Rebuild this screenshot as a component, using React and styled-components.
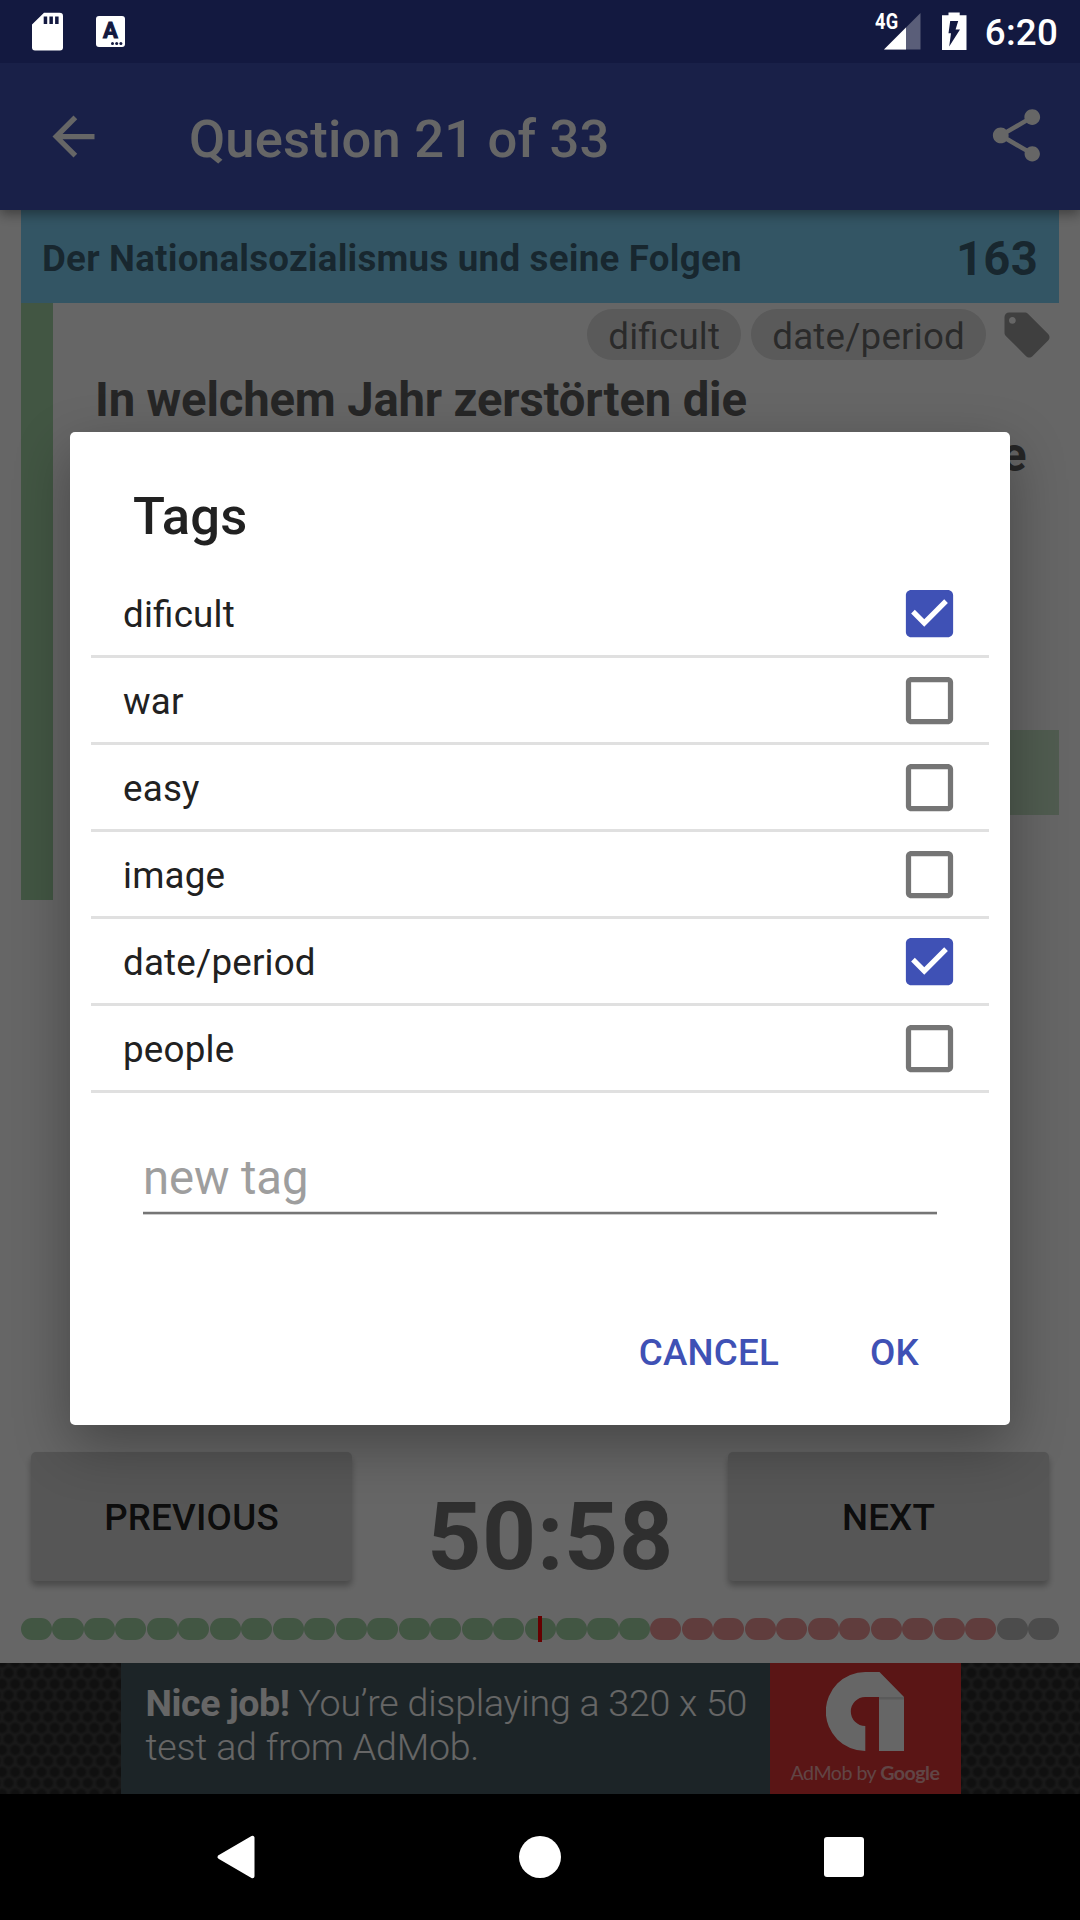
import React from "react";
import styled, { createGlobalStyle, css } from "styled-components";

const GlobalStyle = createGlobalStyle`
  *, *::before, *::after { box-sizing: border-box; }
  body { margin: 0; background: #000; }
  button, input { font: inherit; letter-spacing: inherit; border: 0; background: none; padding: 0; }
`;

const Screen = styled.div`
  position: relative;
  width: 1080px;
  height: 1920px;
  display: flex;
  flex-direction: column;
  overflow: hidden;
  background: #fff;
  color: rgba(0, 0, 0, 0.54);
  font-family: Roboto, "Liberation Sans", sans-serif;
  font-size: 36.75px;
  letter-spacing: 0.2px;
  font-feature-settings: "liga" 1;
`;

/* ---------- status bar ---------- */

const StatusBar = styled.header`
  position: relative;
  z-index: 2;
  height: 63px;
  flex: none;
  display: flex;
  align-items: flex-start;
  padding: 12px 22px 0 32px;
  background: #131940;
  color: #fff;
`;

const Notifications = styled.div`
  display: flex;
  gap: 33px;
  flex: 1;
`;

const AppBadge = styled.div`
  width: 29px;
  height: 31px;
  margin-top: 4px;
  border-radius: 3px;
  background: #fff;
  color: #131940;
  display: flex;
  flex-direction: column;
  align-items: center;
  font-size: 22px;
  font-weight: 700;
  line-height: 30px;
  -webkit-text-stroke: 1px #131940;
`;

const BadgeDots = styled.svg`
  width: 12px;
  height: 3px;
  margin: -4px 0 0 13px;
  flex: none;
`;

const Network = styled.div`
  display: flex;
  width: 46px;
  margin-right: 21px;
`;

const NetworkLabel = styled.span`
  width: 8px;
  flex: none;
  font-size: 22px;
  font-weight: 700;
  line-height: 20px;
  transform: scaleX(0.83);
  transform-origin: 0 0;
`;

const SignalIcon = styled.svg`
  width: 38px;
  height: 38px;
  flex: none;
`;

const Clock = styled.time`
  margin-left: 18px;
  font-weight: 500;
  line-height: 42px;
`;

/* ---------- app bar ---------- */

const AppBar = styled.nav`
  position: relative;
  z-index: 1;
  height: 147px;
  flex: none;
  display: flex;
  align-items: center;
  padding: 0 32px 0 42px;
  background: #3f51b5;
  color: #fff;
  box-shadow: 0 4px 12px rgba(0, 0, 0, 0.4);
`;

const Icon = styled.svg`
  width: ${(p) => p.$size || 63}px;
  height: ${(p) => p.$size || 63}px;
  flex: none;
  fill: currentColor;
`;

const Title = styled.h1`
  flex: 1;
  margin: 4px 0 0 84px;
  font-size: 52.5px;
  font-weight: 500;
  line-height: 62px;
`;

/* ---------- question page ---------- */

const Page = styled.main`
  flex: 1;
  display: flex;
  flex-direction: column;
  padding: 0 21px 23px;
`;

const Topic = styled.div`
  height: 93px;
  flex: none;
  display: flex;
  align-items: center;
  justify-content: space-between;
  padding: 4px 21px 0;
  background: #81d4fa;
  font-weight: 700;
`;

const QuestionNumber = styled.span`
  font-size: 47.25px;
`;

const Card = styled.section`
  height: 597px;
  display: flex;
  border-left: 32px solid #a5d6a7;
`;

const CardBody = styled.div`
  flex: 1;
  min-width: 0;
  display: flex;
  flex-direction: column;
`;

const TagRow = styled.div`
  display: flex;
  justify-content: flex-end;
  align-items: center;
  gap: 10px;
  height: 51px;
  margin-top: 6px;
  padding-right: 5px;
  color: #9e9e9e;
`;

const Chip = styled.span`
  height: 51px;
  padding: 3px 21px 0 21px;
  border-radius: 26px;
  background: #e0e0e0;
  color: rgba(0, 0, 0, 0.54);
  line-height: 50px;

  & + svg { margin-left: 4px; }
`;

const Question = styled.h2`
  height: 164px;
  margin: 13px 20px 0 42px;
  color: #606060;
  font-size: 47.25px;
  font-weight: 700;
  line-height: 55px;
  letter-spacing: -0.17px;
`;

const Answer = styled.div`
  height: 85px;
  margin: 193px 0 0 42px;
  background: #c8e6c9;
`;

const Controls = styled.div`
  display: flex;
  justify-content: space-between;
  margin-top: auto;
  padding: 0 10px;
`;

const NavButton = styled.button`
  width: 321px;
  height: 129px;
  padding-top: 2px;
  border-radius: 5px;
  background: #d6d7d7;
  color: rgba(0, 0, 0, 0.87);
  font-weight: 500;
  box-shadow: 0 5px 6px rgba(0, 0, 0, 0.28);
`;

const Timer = styled.div`
  height: 99px;
  margin: 29px 0 0 21px;
  font-size: 94.5px;
  font-weight: 700;
  line-height: 111px;
  letter-spacing: 0.6px;
`;

const Progress = styled.div`
  position: relative;
  display: flex;
  gap: 0.4px;
  height: 22px;
  margin-top: 37px;
  flex: none;

  &::after {
    content: "";
    position: absolute;
    left: 517px;
    top: -2px;
    width: 4px;
    height: 26px;
    background: #f00;
  }
`;

const pillColors = { right: "#a5d6a7", wrong: "#ef9a9a", open: "#bdbdbd" };

const Pill = styled.span`
  flex: 1;
  border-radius: 11px;
  background: ${(p) => pillColors[p.$state]};
`;

/* ---------- ad banner ---------- */

const AdStrip = styled.aside`
  height: 131px;
  flex: none;
  display: flex;
  justify-content: center;
  padding-left: 1px;
  background-color: #404040;
  background-image: radial-gradient(circle, #292929 3.5px, transparent 6.5px),
    radial-gradient(circle, #292929 3.5px, transparent 6.5px);
  background-size: 13.2px 22px;
  background-position: 2px -1px, 8.6px 10px;
`;

const AdText = styled.p`
  width: 649px;
  margin: 0;
  padding: 18px 0 0 25px;
  background: #485a61;
  color: #fff;
  font-size: 37.5px;
  font-weight: 300;
  line-height: 44px;
  letter-spacing: -0.2px;
  white-space: nowrap;

  b { font-weight: 700; letter-spacing: -0.4px; }
`;

const AdBrand = styled.div`
  width: 191px;
  display: flex;
  flex-direction: column;
  align-items: center;
  background: #e03535;
  color: rgba(255, 255, 255, 0.6);
  font-family: Lato, sans-serif;
  font-size: 19.6px;
  line-height: 24px;
  letter-spacing: -0.5px;
  white-space: nowrap;

  svg { width: 78px; height: 79px; margin: 9px 0 10px; flex: none; }
`;

/* ---------- dialog ---------- */

const Scrim = styled.div`
  position: absolute;
  inset: 0;
  z-index: 1;
  display: flex;
  align-items: flex-start;
  justify-content: center;
  padding-top: 432px;
  background: rgba(0, 0, 0, 0.6);
`;

const Dialog = styled.div`
  width: 940px;
  height: 993px;
  display: flex;
  flex-direction: column;
  padding: 0 21px;
  border-radius: 5px;
  background: #fff;
  color: #212121;
  box-shadow: 0 20px 56px rgba(0, 0, 0, 0.32);
`;

const DialogTitle = styled.h2`
  height: 139px;
  margin: 0;
  padding: 53px 42px 0;
  font-size: 52.5px;
  font-weight: 500;
  line-height: 62px;
`;

const Option = styled.label`
  height: 87px;
  flex: none;
  display: flex;
  align-items: center;
  justify-content: space-between;
  padding: 0 28.5px 0 32px;
  border-bottom: 3px solid #e0e0e0;
`;

const OptionName = styled.span`
  padding-top: 3px;
`;

const CheckIcon = styled(Icon)`
  ${(p) => css`color: ${p.$checked ? "#3f51b5" : "#757575"};`}
`;

const Field = styled.div`
  height: 73px;
  margin: 49px 52px 0;
  background: linear-gradient(#ddd 0 1px, #757575 1px 3px, #ccc 3px 4px) bottom / 100% 4px no-repeat;
`;

const Input = styled.input`
  width: 100%;
  height: 70px;
  padding-top: 1px;
  outline: 0;
  font-size: 47.25px;
  letter-spacing: -0.1px;
  &::placeholder { color: #9e9e9e; opacity: 1; }
`;

const Actions = styled.div`
  display: flex;
  justify-content: flex-end;
  gap: 91px;
  margin-top: 113px;
  padding-right: 70px;
`;

const Action = styled.button`
  color: #3f51b5;
  font-weight: 500;
  line-height: 50px;
`;

/* ---------- system navigation ---------- */

const SystemNav = styled.footer`
  position: relative;
  z-index: 2;
  height: 126px;
  flex: none;
  display: flex;
  justify-content: space-between;
  align-items: center;
  padding: 0 215px;
  background: #000;
  color: #fff;
`;

const tags = [
  ["dificult", true],
  ["war", false],
  ["easy", false],
  ["image", false],
  ["date/period", true],
  ["people", false],
];

const results = [
  ...Array(20).fill("right"),
  ...Array(11).fill("wrong"),
  ...Array(2).fill("open"),
];

const CHECKED =
  "M19 3H5c-1.1 0-2 .9-2 2v14c0 1.1.9 2 2 2h14c1.1 0 2-.9 2-2V5c0-1.1-.9-2-2-2zm-9 14l-5-5 1.4-1.4 3.6 3.6 7.6-7.6L19 8l-9 9z";
const UNCHECKED =
  "M19 5v14H5V5h14m0-2H5c-1.1 0-2 .9-2 2v14c0 1.1.9 2 2 2h14c1.1 0 2-.9 2-2V5c0-1.1-.9-2-2-2z";

export default function App() {
  return (
    <Screen>
      <GlobalStyle />
      <StatusBar>
        <Notifications>
          <svg width="31" height="39" viewBox="0 0 31 39">
            <path
              fill="#fff"
              fillRule="evenodd"
              d="M12 .7H27.5Q31 .7 31 4V35.500Q31 38.500 28 38.500H3Q0 38.500 0 35.500V12.500ZM11.700 4.500V12H15.200V4.500ZM17.400 4.500V12H20.900V4.500ZM23.100 4.500V12H26.600V4.500Z"
            />
          </svg>
          <AppBadge>
            A
            <BadgeDots viewBox="0 0 12 3" fill="#131940">
              <circle cx="1.500" cy="1.500" r="1.500" />
              <circle cx="5.700" cy="1.500" r="1.500" />
              <circle cx="9.900" cy="1.500" r="1.500" />
            </BadgeDots>
          </AppBadge>
        </Notifications>
        <Network>
          <NetworkLabel>4G</NetworkLabel>
          <SignalIcon viewBox="0 0 38 38">
            <path d="M1 37.500H37.500V1Z" fill="#fff" fillOpacity=".3" />
            <path d="M1 37.500H23V15.500Z" fill="#fff" />
          </SignalIcon>
        </Network>
        <svg width="25" height="39" viewBox="0 0 25 39">
          <path
            fill="#fff"
            fillRule="evenodd"
            d="M6.500 .5H17.700V3.300H24.500V38H0V3.300H6.500ZM8.200 9H16.200L13.600 17.500H18L7.200 34.500L9 21.300H6.500Z"
          />
        </svg>
        <Clock>6:20</Clock>
      </StatusBar>

      <AppBar>
        <Icon viewBox="0 0 24 24">
          <path d="M20 11H7.830l5.590-5.590L12 4l-8 8 8 8 1.410-1.410L7.830 13H20v-2z" />
        </Icon>
        <Title>Question 21 of 33</Title>
        <Icon viewBox="0 0.400 24 24">
          <path d="M18 16.080c-.76 0-1.440.3-1.960.77L8.910 12.700c.05-.23.09-.46.09-.7s-.04-.47-.09-.7l7.050-4.110c.54.5 1.250.81 2.040.81 1.660 0 3-1.340 3-3s-1.340-3-3-3-3 1.340-3 3c0 .24.04.47.09.7L8.040 9.810C7.500 9.310 6.790 9 6 9c-1.660 0-3 1.340-3 3s1.340 3 3 3c.79 0 1.500-.31 2.040-.81l7.120 4.160c-.05.21-.08.43-.08.65 0 1.610 1.310 2.920 2.920 2.920s2.920-1.310 2.920-2.920-1.310-2.920-2.920-2.920z" />
        </Icon>
      </AppBar>

      <Page>
        <Topic>
          <span>Der Nationalsozialismus und seine Folgen</span>
          <QuestionNumber>163</QuestionNumber>
        </Topic>
        <Card>
          <CardBody>
            <TagRow>
              <Chip>dificult</Chip>
              <Chip>date/period</Chip>
              <Icon $size={54} viewBox="0 0 24 24">
                <path d="M21.410 11.580l-9-9C12.050 2.220 11.550 2 11 2H4c-1.100 0-2 .9-2 2v7c0 .55.22 1.050.59 1.420l9 9c.36.36.86.58 1.410.58.55 0 1.050-.22 1.410-.59l7-7c.37-.36.59-.86.59-1.410 0-.55-.23-1.060-.59-1.420zM5.500 7C4.670 7 4 6.330 4 5.500S4.670 4 5.500 4 7 4.670 7 5.500 6.330 7 5.500 7z" />
              </Icon>
            </TagRow>
            <Question>
              In welchem Jahr zerstörten die
              <br />
              Nationalsozialisten Synagogen und jüdische
            </Question>
            <Answer />
          </CardBody>
        </Card>
        <Controls>
          <NavButton>PREVIOUS</NavButton>
          <Timer>50:58</Timer>
          <NavButton>NEXT</NavButton>
        </Controls>
        <Progress>
          {results.map((state, i) => (
            <Pill key={i} $state={state} />
          ))}
        </Progress>
      </Page>

      <AdStrip>
        <AdText>
          <b>Nice job!</b> You’re displaying a 320 x 50
          <br />
          test ad from AdMob.
        </AdText>
        <AdBrand>
          <svg viewBox="0 0 78 79">
            <path
              fill="#fff"
              d="M39.300 0H53.500L78 25V79H53V25H39.300A14.500 14.500 0 0 0 39.300 54V79A39.500 39.500 0 0 1 39.300 0Z"
            />
            <path fill="#e2e2e2" d="M53 25H78V27.500H53Z" />
          </svg>
          <span>AdMob by <b>Google</b></span>
        </AdBrand>
      </AdStrip>

      <Scrim>
        <Dialog role="dialog">
          <DialogTitle>Tags</DialogTitle>
          {tags.map(([name, checked]) => (
            <Option key={name}>
              <OptionName>{name}</OptionName>
              <CheckIcon $checked={checked} viewBox="0 0 24 24">
                <path d={checked ? CHECKED : UNCHECKED} />
              </CheckIcon>
            </Option>
          ))}
          <Field>
            <Input placeholder="new tag" />
          </Field>
          <Actions>
            <Action>CANCEL</Action>
            <Action>OK</Action>
          </Actions>
        </Dialog>
      </Scrim>

      <SystemNav>
        <svg width="42" height="44" viewBox="0 0 42 44">
          <path
            d="M4.500 22L37.500 2.800V41.200Z"
            fill="#fff"
            stroke="#fff"
            strokeWidth="4"
            strokeLinejoin="round"
          />
        </svg>
        <svg width="42" height="42" viewBox="0 0 42 42">
          <circle cx="21" cy="21" r="21" fill="#fff" />
        </svg>
        <svg width="42" height="42" viewBox="0 0 42 42">
          <rect x="1" y="1" width="40" height="40" rx="3" fill="#fff" />
        </svg>
      </SystemNav>
    </Screen>
  );
}
